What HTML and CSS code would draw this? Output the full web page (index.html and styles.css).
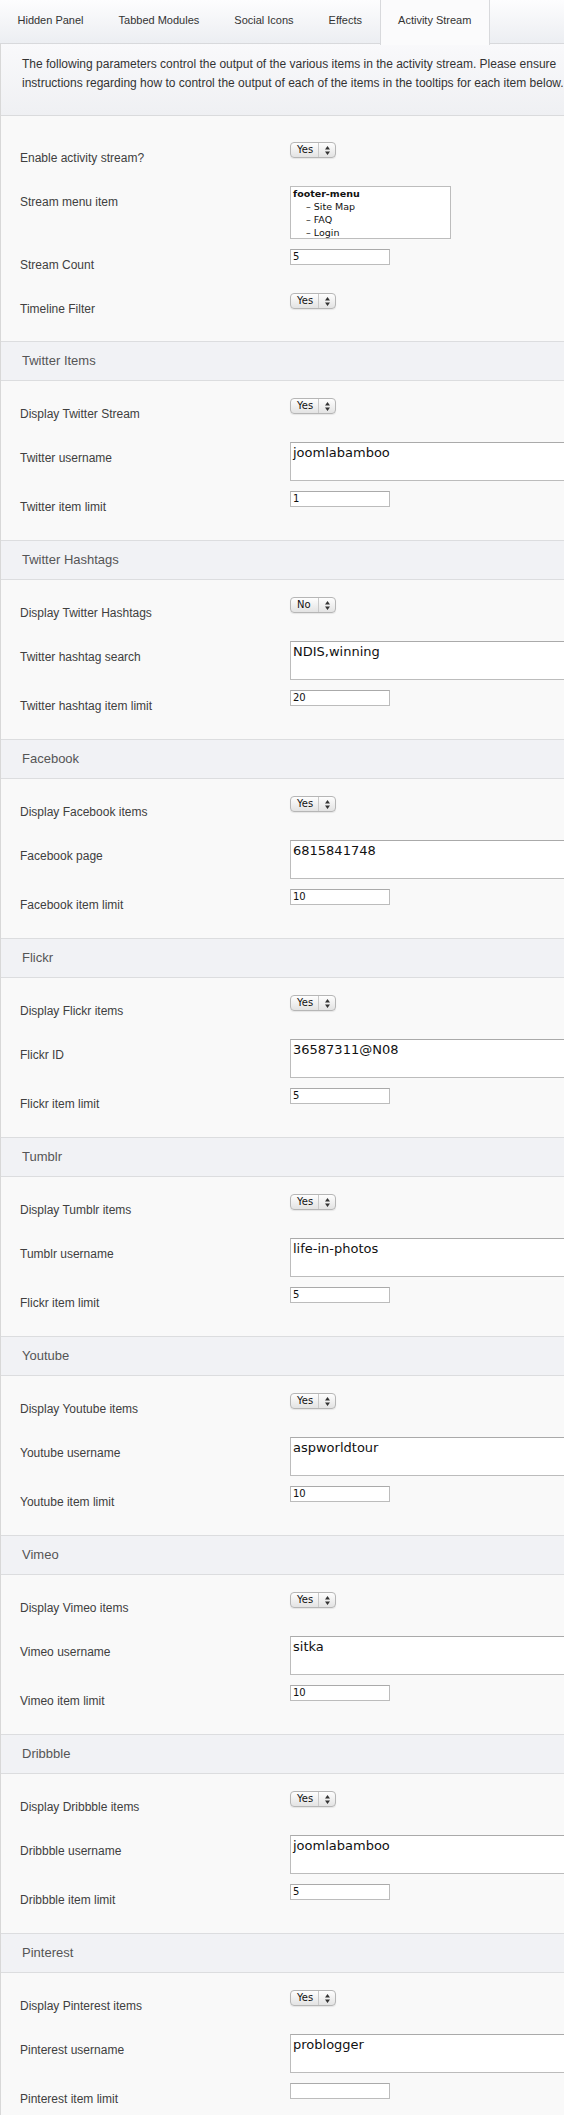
FILE: index.html
```html
<!DOCTYPE html>
<html lang="en">
<head>
<meta charset="utf-8">
<title>Activity Stream</title>
<link rel="stylesheet" href="styles.css">
</head>
<body>
<div class="page">
  <div class="frame">
    <nav class="tabs">
      <span class="tab">Hidden Panel</span>
      <span class="tab">Tabbed Modules</span>
      <span class="tab">Social Icons</span>
      <span class="tab">Effects</span>
      <span class="tab active">Activity Stream</span>
    </nav>
    <div class="panel">
      <div class="intro">
        <p>The following parameters control the output of the various items in the activity stream. Please ensure<br>instructions regarding how to control the output of each of the items in the tooltips for each item below.</p>
      </div>

      <div class="fields first">
        <div class="row"><label class="lbl">Enable activity stream?</label><span class="select"><span class="sel-val">Yes</span><span class="sel-arrows"><svg width="5" height="9" viewBox="0 0 5 9"><path d="M2.5 0L5 3.5H0z M0 5.5H5L2.5 9z"/></svg></span></span></div>
        <div class="row"><label class="lbl">Stream menu item</label>
          <div class="listbox">
            <div class="opt-group">footer-menu</div>
            <div class="opt">– Site Map</div>
            <div class="opt">– FAQ</div>
            <div class="opt">– Login</div>
          </div>
        </div>
        <div class="row"><label class="lbl">Stream Count</label><span class="input-sm">5</span></div>
        <div class="row"><label class="lbl">Timeline Filter</label><span class="select"><span class="sel-val">Yes</span><span class="sel-arrows"><svg width="5" height="9" viewBox="0 0 5 9"><path d="M2.5 0L5 3.5H0z M0 5.5H5L2.5 9z"/></svg></span></span></div>
      </div>

      <section class="group">
        <h3 class="sec-head">Twitter Items</h3>
        <div class="fields">
          <div class="row"><label class="lbl">Display Twitter Stream</label><span class="select"><span class="sel-val">Yes</span><span class="sel-arrows"><svg width="5" height="9" viewBox="0 0 5 9"><path d="M2.5 0L5 3.5H0z M0 5.5H5L2.5 9z"/></svg></span></span></div>
          <div class="row"><label class="lbl">Twitter username</label><span class="input-lg">joomlabamboo</span></div>
          <div class="row"><label class="lbl">Twitter item limit</label><span class="input-sm">1</span></div>
        </div>
      </section>

      <section class="group">
        <h3 class="sec-head">Twitter Hashtags</h3>
        <div class="fields">
          <div class="row"><label class="lbl">Display Twitter Hashtags</label><span class="select"><span class="sel-val">No</span><span class="sel-arrows"><svg width="5" height="9" viewBox="0 0 5 9"><path d="M2.5 0L5 3.5H0z M0 5.5H5L2.5 9z"/></svg></span></span></div>
          <div class="row"><label class="lbl">Twitter hashtag search</label><span class="input-lg">NDIS,winning</span></div>
          <div class="row"><label class="lbl">Twitter hashtag item limit</label><span class="input-sm">20</span></div>
        </div>
      </section>

      <section class="group">
        <h3 class="sec-head">Facebook</h3>
        <div class="fields">
          <div class="row"><label class="lbl">Display Facebook items</label><span class="select"><span class="sel-val">Yes</span><span class="sel-arrows"><svg width="5" height="9" viewBox="0 0 5 9"><path d="M2.5 0L5 3.5H0z M0 5.5H5L2.5 9z"/></svg></span></span></div>
          <div class="row"><label class="lbl">Facebook page</label><span class="input-lg">6815841748</span></div>
          <div class="row"><label class="lbl">Facebook item limit</label><span class="input-sm">10</span></div>
        </div>
      </section>

      <section class="group">
        <h3 class="sec-head">Flickr</h3>
        <div class="fields">
          <div class="row"><label class="lbl">Display Flickr items</label><span class="select"><span class="sel-val">Yes</span><span class="sel-arrows"><svg width="5" height="9" viewBox="0 0 5 9"><path d="M2.5 0L5 3.5H0z M0 5.5H5L2.5 9z"/></svg></span></span></div>
          <div class="row"><label class="lbl">Flickr ID</label><span class="input-lg">36587311@N08</span></div>
          <div class="row"><label class="lbl">Flickr item limit</label><span class="input-sm">5</span></div>
        </div>
      </section>

      <section class="group">
        <h3 class="sec-head">Tumblr</h3>
        <div class="fields">
          <div class="row"><label class="lbl">Display Tumblr items</label><span class="select"><span class="sel-val">Yes</span><span class="sel-arrows"><svg width="5" height="9" viewBox="0 0 5 9"><path d="M2.5 0L5 3.5H0z M0 5.5H5L2.5 9z"/></svg></span></span></div>
          <div class="row"><label class="lbl">Tumblr username</label><span class="input-lg">life-in-photos</span></div>
          <div class="row"><label class="lbl">Flickr item limit</label><span class="input-sm">5</span></div>
        </div>
      </section>

      <section class="group">
        <h3 class="sec-head">Youtube</h3>
        <div class="fields">
          <div class="row"><label class="lbl">Display Youtube items</label><span class="select"><span class="sel-val">Yes</span><span class="sel-arrows"><svg width="5" height="9" viewBox="0 0 5 9"><path d="M2.5 0L5 3.5H0z M0 5.5H5L2.5 9z"/></svg></span></span></div>
          <div class="row"><label class="lbl">Youtube username</label><span class="input-lg">aspworldtour</span></div>
          <div class="row"><label class="lbl">Youtube item limit</label><span class="input-sm">10</span></div>
        </div>
      </section>

      <section class="group">
        <h3 class="sec-head">Vimeo</h3>
        <div class="fields">
          <div class="row"><label class="lbl">Display Vimeo items</label><span class="select"><span class="sel-val">Yes</span><span class="sel-arrows"><svg width="5" height="9" viewBox="0 0 5 9"><path d="M2.5 0L5 3.5H0z M0 5.5H5L2.5 9z"/></svg></span></span></div>
          <div class="row"><label class="lbl">Vimeo username</label><span class="input-lg">sitka</span></div>
          <div class="row"><label class="lbl">Vimeo item limit</label><span class="input-sm">10</span></div>
        </div>
      </section>

      <section class="group">
        <h3 class="sec-head">Dribbble</h3>
        <div class="fields">
          <div class="row"><label class="lbl">Display Dribbble items</label><span class="select"><span class="sel-val">Yes</span><span class="sel-arrows"><svg width="5" height="9" viewBox="0 0 5 9"><path d="M2.5 0L5 3.5H0z M0 5.5H5L2.5 9z"/></svg></span></span></div>
          <div class="row"><label class="lbl">Dribbble username</label><span class="input-lg">joomlabamboo</span></div>
          <div class="row"><label class="lbl">Dribbble item limit</label><span class="input-sm">5</span></div>
        </div>
      </section>

      <section class="group">
        <h3 class="sec-head">Pinterest</h3>
        <div class="fields">
          <div class="row"><label class="lbl">Display Pinterest items</label><span class="select"><span class="sel-val">Yes</span><span class="sel-arrows"><svg width="5" height="9" viewBox="0 0 5 9"><path d="M2.5 0L5 3.5H0z M0 5.5H5L2.5 9z"/></svg></span></span></div>
          <div class="row"><label class="lbl">Pinterest username</label><span class="input-lg">problogger</span></div>
          <div class="row"><label class="lbl">Pinterest item limit</label><span class="input-sm"></span></div>
        </div>
      </section>
    </div>
  </div>
</div>
</body>
</html>
```

FILE: styles.css
```css
html, body {
  margin: 0;
  padding: 0;
  background: #f9f9f9;
}

.page {
  width: 564px;
  height: 2115px;
  overflow: hidden;
  font-family: "Liberation Sans", Arial, sans-serif;
}

.frame {
  width: 760px;
}

/* Tabs */
.tabs {
  display: flex;
  height: 43px;
  border-bottom: 1px solid #d8d9dc;
  background: linear-gradient(#fdfdfe, #eceef2);
}

.tab {
  padding: 0 17.5px 2px;
  line-height: 41px;
  font-size: 11px;
  color: #333;
  white-space: nowrap;
}

.tab.active {
  background: #fbfbfc;
  border-left: 1px solid #d8d9dc;
  border-right: 1px solid #d8d9dc;
  height: 42px;
  margin-bottom: -1px;
  padding-bottom: 3px;
}

/* Panel */
.panel {
  border-left: 1px solid #d8d8d8;
}

.intro {
  background: linear-gradient(#f9f9fb, #eff0f3);
  border-bottom: 1px solid #dadbdd;
  padding: 11px 0 22px 21px;
}

.intro p {
  margin: 0;
  font-size: 12px;
  line-height: 19px;
  color: #333;
  white-space: nowrap;
}

.fields {
  padding: 17px 0 5px;
  background: #f9f9f9;
}

.fields.first {
  padding: 26px 0 4px;
}

.row {
  display: grid;
  grid-template-columns: 289px auto;
  align-items: start;
  min-height: 44px;
}

.lbl {
  padding: 9px 0 0 19px;
  font-size: 12px;
  line-height: 15px;
  color: #404040;
}

.sec-head {
  margin: 0;
  height: 38px;
  line-height: 38px;
  padding-left: 21px;
  font-size: 13px;
  font-weight: normal;
  color: #555;
  background: #f1f2f5;
  border-top: 1px solid #dcdddf;
  border-bottom: 1px solid #dcdddf;
}

/* Controls */
.select {
  display: inline-flex;
  align-items: stretch;
  width: 46px;
  height: 16px;
  margin-bottom: 10px;
  box-sizing: border-box;
  border: 1px solid #b6b6b6;
  border-radius: 4px;
  background: linear-gradient(#fefefe, #e3e3e3);
  box-shadow: 0 1px 1px rgba(0, 0, 0, 0.08);
  font-family: "DejaVu Sans", sans-serif;
  font-size: 10px;
  color: #111;
}

.sel-val {
  width: 28px;
  box-sizing: border-box;
  padding-left: 6px;
  line-height: 14px;
  border-right: 1px solid #c9c9c9;
}

.sel-arrows {
  flex: 1;
  display: flex;
  align-items: center;
  justify-content: center;
}

.sel-arrows svg {
  fill: #333;
}

.listbox {
  width: 161px;
  height: 53px;
  box-sizing: border-box;
  margin-bottom: 10px;
  border: 1px solid #bdbdbd;
  background: #fff;
  padding: 0 2px;
  overflow: hidden;
  font-family: "DejaVu Sans", sans-serif;
  font-size: 9.5px;
  line-height: 13px;
  color: #111;
}

.opt-group {
  font-weight: bold;
}

.opt {
  padding-left: 13px;
}

.input-sm {
  display: block;
  width: 100px;
  height: 16px;
  margin-bottom: 10px;
  box-sizing: border-box;
  border: 1px solid #bcbcbc;
  border-top-color: #aaa;
  background: #fff;
  padding-left: 2px;
  font-family: "DejaVu Sans", sans-serif;
  font-size: 10px;
  line-height: 14px;
  color: #111;
}

.input-lg {
  display: block;
  width: 380px;
  height: 39px;
  margin-bottom: 10px;
  box-sizing: border-box;
  border: 1px solid #bcbcbc;
  border-top-color: #aaa;
  background: #fff;
  padding: 2px 2px 0;
  font-family: "DejaVu Sans", sans-serif;
  font-size: 13px;
  line-height: 16px;
  color: #111;
}
```
